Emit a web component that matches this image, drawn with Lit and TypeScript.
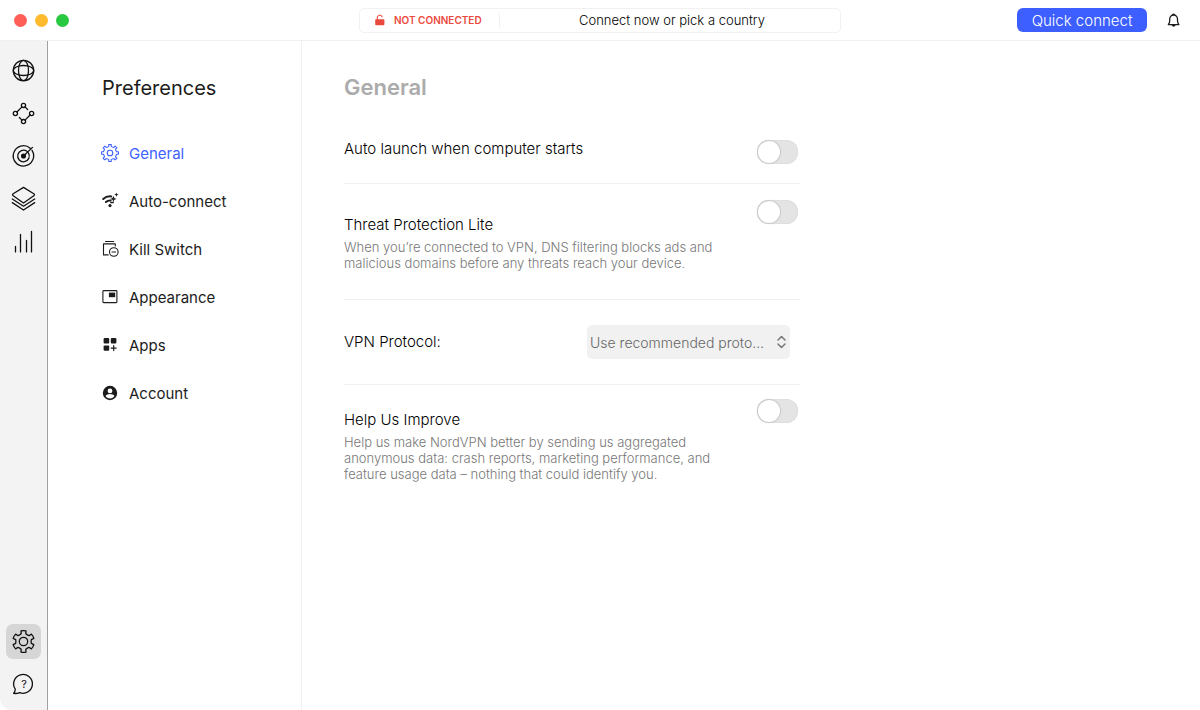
import { LitElement, html, css, svg } from "lit";
import { customElement, state } from "lit/decorators.js";
import { classMap } from "lit/directives/class-map.js";

/** Closed outline of a cog wheel, with rounded joins left to the stroke. */
function cog(cx: number, cy: number, teeth: number, outer: number, inner: number, top: number, base: number): string {
  const step = (Math.PI * 2) / teeth;
  const at = (r: number, a: number) => `${(cx + r * Math.sin(a)).toFixed(2)} ${(cy - r * Math.cos(a)).toFixed(2)}`;
  let d = "";
  for (let i = 0; i < teeth; i++) {
    const a = i * step;
    d += `${i ? "L" : "M"}${at(inner, a - step * base)}L${at(outer, a - step * top)}A${outer} ${outer} 0 0 1 ${at(outer, a + step * top)}L${at(inner, a + step * base)}`;
    d += `Q${at(inner * 0.93, a + step / 2)} ${at(inner, a + step * (1 - base))}`;
  }
  return d + "Z";
}

const rail = {
  globe: svg`<circle cx="17.5" cy="17.5" r="10.2"/><ellipse cx="17.5" cy="17.5" rx="5" ry="10.2"/><ellipse cx="17.5" cy="17.5" rx="10.2" ry="5"/>`,
  mesh: svg`<circle cx="17.5" cy="9.4" r="2.1"/><circle cx="9.4" cy="17.5" r="2.1"/><circle cx="25.6" cy="17.5" r="2.1"/><circle cx="17.5" cy="25.6" r="2.1"/><path d="M16 10.9 10.9 16M24.1 19 19 24.1M19 10.9l2.6 2.6M16 24.1l-2.6-2.6"/>`,
  target: svg`<path d="M24.2 9.2A10.2 10.2 0 1 0 26 11.3M20.9 12.3A5.8 5.8 0 1 0 22.4 13.9M17.5 17l9-8.6" /><circle cx="17.5" cy="17" r="1.9" fill="currentColor"/>`,
  layers: svg`<path d="M17.5 5.4 27.8 11.8q1.4 1 0 2L17.5 21 7.2 13.8q-1.4-1 0-2ZM6.3 17l11.2 7.2 11.2-7.2M6.3 20.6l11.2 7.4 11.2-7.4"/>`,
  stats: svg`<path d="M9.5 21.5v5.4M14.5 9.5v17.4M20.5 15.5v11.4M25.5 6.5v20.4"/>`,
  settings: svg`<path d="${cog(17.5, 17.5, 6, 10.8, 8, 0.22, 0.28)}"/><circle cx="17.5" cy="17.5" r="4.2"/>`,
  help: svg`<path d="M9.3 22.2A9.4 9.4 0 1 1 13.6 25.6Q11 26.8 7.6 26.4 9.2 24.7 9.3 22.2Z"/><text x="18" y="21" text-anchor="middle">?</text>`,
};

const nav = {
  general: svg`<path d="${cog(9, 9, 8, 8.5, 6.7, 0.19, 0.23)}"/><circle cx="9" cy="9" r="2.8"/>`,
  auto: svg`<g fill="currentColor" stroke="none"><circle cx="9" cy="13.6" r="1.6"/><path d="m15.4.4.6 1.6 1.6.6-1.6.6-.6 1.6-.6-1.6-1.6-.6 1.6-.6ZM12.4 3.7l.9 2.3 2.3.9-2.3.9-.9 2.3-.9-2.3-2.3-.9 2.3-.9Z"/></g><path stroke-width="2" d="M2.2 7Q5.6 3.9 10.2 4.4M4.9 10Q7 8.2 9.6 8.4"/><path stroke-width="1.5" d="M9.8 10.5h2.4"/>`,
  kill: svg`<path d="M4.5 1.5h8.2M7.2 14.9H2.5v-11h11.8v2"/><circle cx="12.8" cy="12" r="4.3"/><path d="M11 12h3.6"/>`,
  appearance: svg`<rect x="1.9" y="2.6" width="14" height="12" rx=".8"/><path fill="currentColor" stroke="none" d="M7.9 4.6h6.3v4.6H7.9z"/>`,
  apps: svg`<g fill="currentColor" stroke="none"><rect x="2.6" y="2" width="5.6" height="5.4" rx="1"/><rect x="9.8" y="2" width="5.6" height="5.4" rx="1"/><rect x="2.6" y="9.4" width="5.6" height="5.4" rx="1"/></g><path stroke-width="1.2" d="M12.7 9.6v5M10.2 12.1h5"/>`,
  account: svg`<path fill="currentColor" stroke="none" fill-rule="evenodd" d="M9 1.8a7.2 7.2 0 1 0 0 14.4A7.2 7.2 0 0 0 9 1.8Zm0 2.7a2.4 2.4 0 1 1 0 4.8 2.4 2.4 0 0 1 0-4.8Zm0 10c-2.1 0-3.6-1-4.4-2.5.1-1.4 2.9-2.1 4.4-2.1s4.3.7 4.4 2.1c-.8 1.5-2.3 2.5-4.4 2.5Z"/>`,
};

const railTop = [
  { label: "Countries", icon: rail.globe },
  { label: "Meshnet", icon: rail.mesh },
  { label: "Threat Protection", icon: rail.target },
  { label: "Presets", icon: rail.layers },
  { label: "Statistics", icon: rail.stats },
];

const sections = [
  { id: "general", label: "General", icon: nav.general },
  { id: "auto-connect", label: "Auto-connect", icon: nav.auto },
  { id: "kill-switch", label: "Kill Switch", icon: nav.kill },
  { id: "appearance", label: "Appearance", icon: nav.appearance },
  { id: "apps", label: "Apps", icon: nav.apps },
  { id: "account", label: "Account", icon: nav.account },
];

@customElement("app-root")
export class AppRoot extends LitElement {
  @state() private section = "general";

  static styles = css`
    :host {
      display: flex;
      flex-direction: column;
      min-height: 100vh;
      background: #fff;
      color: #1c1c1c;
      font: 400 15px/20px Inter, "Liberation Sans", sans-serif;
    }
    * { box-sizing: border-box; }
    h1, h2, p { margin: 0; font-weight: 400; }
    button, select { font: inherit; color: inherit; border: 0; padding: 0; background: none; }
    svg { display: block; flex: none; fill: none; stroke: currentColor; stroke-linejoin: round; stroke-linecap: round; }

    .titlebar {
      display: grid;
      grid-template-columns: 1fr minmax(0, 482px) 1fr;
      align-items: center;
      height: 41px;
      border-bottom: 1px solid #f0f0f0;
    }
    .lights { display: flex; gap: 8px; padding-left: 14px; }
    .light { width: 13px; height: 13px; border-radius: 50%; background: #ff5f57; }
    .light.minimise { background: #febb2e; }
    .light.zoom { background: #28c840; }
    .status {
      display: flex;
      align-items: center;
      height: 25px;
      border: 1px solid #f1f1f1;
      border-radius: 5px;
    }
    .state {
      display: flex;
      align-items: center;
      gap: 8px;
      width: 140px;
      height: 15px;
      padding-left: 14px;
      border-right: 1px solid #f1f1f1;
      color: #ea4a3d;
      font-size: 10px;
      font-weight: 600;
      white-space: nowrap;
    }
    .hint { flex: 1; padding-left: 4px; text-align: center; font-size: 13px; font-weight: 300; color: #000; }
    .actions { display: flex; justify-content: flex-end; align-items: center; gap: 16px; padding-right: 16px; }
    .connect {
      width: 130px;
      height: 24px;
      padding-top: 1px;
      border-radius: 6px;
      background: #3e5fff;
      color: #fff;
      font-weight: 300;
    }

    .body { flex: 1; display: flex; }
    .rail {
      display: flex;
      flex-direction: column;
      align-items: center;
      gap: 8px;
      width: 48px;
      padding: 12px 0 8px;
      background: #f3f3f3;
      border-right: 1px solid #a0a0a0;
      border-bottom-left-radius: 12px;
      color: #111;
    }
    .rail button { width: 35px; height: 35px; border-radius: 7px; }
    .rail .active { background: #d6d6d6; }
    .rail .push { margin-top: auto; }
    .rail text { font-size: 11px; fill: currentColor; stroke: none; }

    .sidebar { width: 254px; padding: 35px 24px 0 54px; border-right: 1px solid #f1f1f1; }
    .sidebar h1 { font-size: 20px; line-height: 24px; }
    .menu { display: flex; flex-direction: column; gap: 26px; margin-top: 43px; }
    .menu a { display: flex; align-items: center; gap: 10px; color: inherit; text-decoration: none; line-height: 22px; }
    .menu svg { align-self: flex-start; margin: 1px 0 0 -1px; }
    .menu .current { color: #3e5fff; }

    .content { flex: 1; min-width: 0; padding: 34px 42px 0; }
    .settings { max-width: 456px; }
    .settings h2 { font-size: 22px; line-height: 24px; font-weight: 600; color: #ababab; }
    .row { display: flex; justify-content: space-between; align-items: flex-start; padding: 16px 2px 20px 0; }
    .row + .row { border-top: 1px solid #f0f0f0; }
    .row.first { padding: 41px 2px 19px 0; }
    .row.first label { margin-top: -1px; }
    .row.protocol { align-items: center; padding: 25px 10px 25px 0; }
    .row.last { padding-top: 14px; }
    .row label { font-weight: 300; color: #000; }
    .text { max-width: 380px; padding: 15px 0 8px; }
    .last .text { padding-top: 11px; }
    .text p { margin-top: 4px; font-size: 13px; line-height: 16px; font-weight: 300; color: #777; }

    .switch {
      appearance: none;
      display: block;
      flex: none;
      width: 41px;
      height: 24px;
      margin: 0;
      padding: 1px;
      border-radius: 12px;
      background: #e4e4e4;
      box-shadow: inset 0 0 1px #bbb;
    }
    .switch::before {
      content: "";
      display: block;
      width: 22px;
      height: 22px;
      border-radius: 50%;
      background: #fff;
      box-shadow: 0 0 1px 1px #c8c8c8;
    }
    .switch:checked { background: #3e5fff; }
    .switch:checked::before { margin-left: auto; }

    .picker { display: grid; align-items: center; width: 203px; }
    .picker > * { grid-area: 1 / 1; }
    .picker select {
      appearance: none;
      width: 100%;
      height: 34px;
      padding: 1px 22px 0 3px;
      border-radius: 5px;
      background: #f1f1f1;
      color: #666;
      font-size: 14px;
      font-weight: 300;
      overflow: hidden;
      white-space: nowrap;
      text-overflow: ellipsis;
    }
    .picker svg { justify-self: end; margin-right: 3px; color: #777; pointer-events: none; }
  `;

  private railButton(label: string, icon: unknown, classes: Record<string, boolean> = {}) {
    return html`<button class=${classMap(classes)} aria-label=${label}>
      <svg width="35" height="35" viewBox="0 0 35 35" stroke-width="1.3">${icon}</svg>
    </button>`;
  }

  render() {
    return html`
      <header class="titlebar">
        <div class="lights">
          <button class="light" aria-label="Close"></button>
          <button class="light minimise" aria-label="Minimise"></button>
          <button class="light zoom" aria-label="Zoom"></button>
        </div>
        <div class="status">
          <div class="state">
            <svg width="12" height="12" viewBox="0 0 12 12">
              <path fill="currentColor" stroke="none" d="M2.2 5.3h7.2q1 0 1 1v4q0 1-1 1H2.2q-1 0-1-1v-4q0-1 1-1Z" />
              <path stroke-width="1.1" d="M3.3 5.5V3.6A2.5 2.5 0 0 1 8.1 2.8" />
            </svg>
            <span>NOT CONNECTED</span>
          </div>
          <div class="hint">Connect now or pick a country</div>
        </div>
        <div class="actions">
          <button class="connect">Quick connect</button>
          <button aria-label="Notifications">
            <svg width="21" height="20" viewBox="0 0 21 20" stroke-width="1.3">
              <path d="M5.3 14.6q1.4-1.6 1.4-3.8V9.2a3.9 4.2 0 0 1 7.8 0v1.6q0 2.2 1.4 3.8ZM9.4 4.7q1.1-1 2.2 0M9.2 15.2q1.3 1.6 2.7 0" />
            </svg>
          </button>
        </div>
      </header>
      <div class="body">
        <nav class="rail" aria-label="Main">
          ${railTop.map((r) => this.railButton(r.label, r.icon))}
          ${this.railButton("Preferences", rail.settings, { push: true, active: true })}
          ${this.railButton("Help", rail.help)}
        </nav>
        <aside class="sidebar">
          <h1>Preferences</h1>
          <nav class="menu" aria-label="Preferences">
            ${sections.map(
              (s) => html`<a
                href="#${s.id}"
                class=${classMap({ current: s.id === this.section })}
                @click=${() => (this.section = s.id)}
                ><svg width="18" height="18" viewBox="0 0 18 18" stroke-width="1.1">${s.icon}</svg><span>${s.label}</span></a
              >`
            )}
          </nav>
        </aside>
        <main class="content">
          <div class="settings">
            <h2>General</h2>
            <div class="row first">
              <label for="launch">Auto launch when computer starts</label>
              <input class="switch" id="launch" type="checkbox" role="switch" />
            </div>
            <div class="row">
              <div class="text">
                <label for="threat">Threat Protection Lite</label>
                <p>When you’re connected to VPN, DNS filtering blocks ads and malicious domains before any threats reach your device.</p>
              </div>
              <input class="switch" id="threat" type="checkbox" role="switch" />
            </div>
            <div class="row protocol">
              <label for="protocol">VPN Protocol:</label>
              <div class="picker">
                <select id="protocol">
                  <option>Use recommended protocol</option>
                </select>
                <svg width="11" height="14" viewBox="0 0 11 14" stroke-width="1.5">
                  <path d="M2 5 5.5 1.5 9 5M2 9l3.5 3.5L9 9" />
                </svg>
              </div>
            </div>
            <div class="row last">
              <div class="text">
                <label for="improve">Help Us Improve</label>
                <p>Help us make NordVPN better by sending us aggregated anonymous data: crash reports, marketing performance, and feature usage data – nothing that could identify you.</p>
              </div>
              <input class="switch" id="improve" type="checkbox" role="switch" />
            </div>
          </div>
        </main>
      </div>
    `;
  }
}
